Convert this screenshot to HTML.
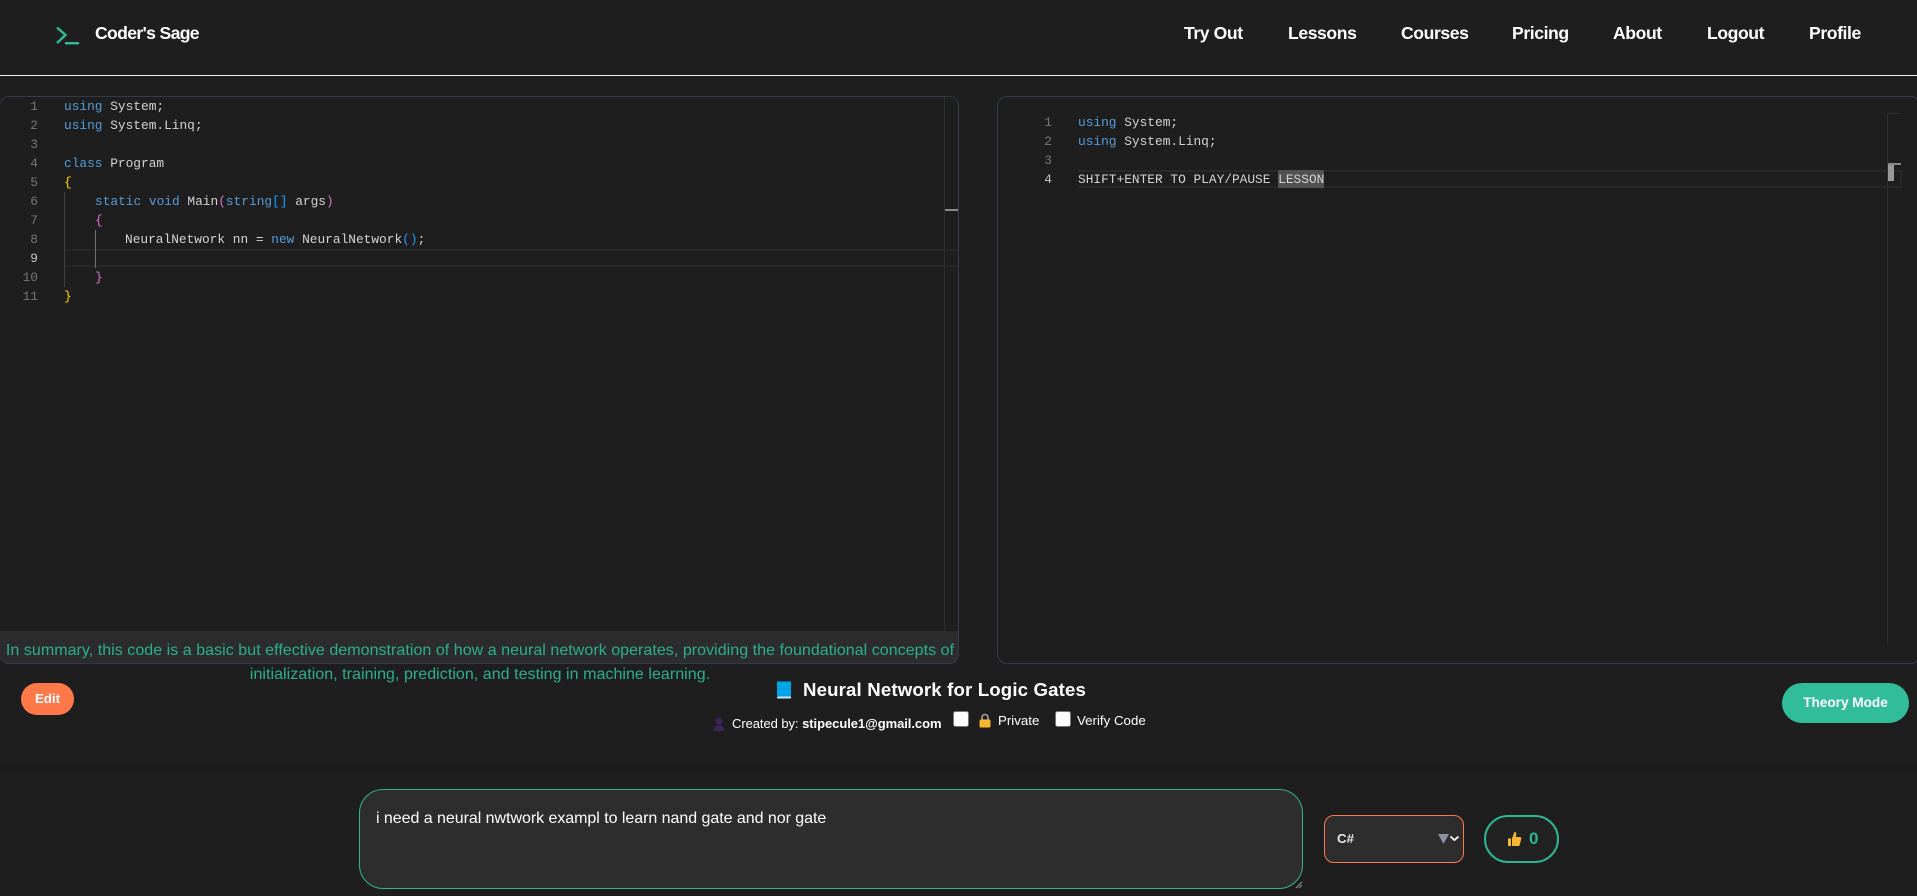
<!DOCTYPE html>
<html lang="en"><head><meta charset="utf-8"><title>Coder's Sage</title>
<style>
html,body{margin:0;padding:0;background:#1e1e1e;width:1917px;height:896px;overflow:hidden}
body{position:relative;font-family:"Liberation Sans",sans-serif;color:#fff}
.a{position:absolute;white-space:nowrap}
.nav{top:23px;font-size:17.6px;font-weight:700;line-height:20px;letter-spacing:-.42px;color:#fff}
.c{position:absolute;font-family:"Liberation Mono",monospace;font-size:12.83px;line-height:19px;height:19px;white-space:pre;color:#d4d4d4}
.n{position:absolute;font-family:"Liberation Mono",monospace;font-size:12.83px;line-height:19px;text-align:right;width:30px;color:#767676}
.k{color:#569cd6}.g{color:#ffd700}.p{color:#da70d6}.b{color:#179fff}
.box{position:absolute;border:1px solid #323a4c;box-sizing:border-box;border-radius:10px}
</style></head><body>
<svg class="a" style="left:54px;top:26px" width="26" height="20" viewBox="0 0 26 20"><path d="M3 1.500 L11.500 9 L3 17" fill="none" stroke="#2ebd96" stroke-width="2.400"/><path d="M11 17.200H25" stroke="#2ebd96" stroke-width="2.400"/></svg>
<div class="a" style="left:95px;top:23px;font-size:17.6px;font-weight:700;line-height:20px;letter-spacing:-.65px">Coder's Sage</div>
<div class="a nav" style="left:1184px">Try Out</div>
<div class="a nav" style="left:1288px">Lessons</div>
<div class="a nav" style="left:1401px">Courses</div>
<div class="a nav" style="left:1512px">Pricing</div>
<div class="a nav" style="left:1613px">About</div>
<div class="a nav" style="left:1707px">Logout</div>
<div class="a nav" style="left:1809px">Profile</div>
<div class="a" style="left:0;top:75px;width:1917px;height:1px;background:#f2f2f2"></div>

<!-- left editor -->
<div class="box" style="left:-1px;top:96px;width:960px;height:568px"></div>
<div class="a" style="left:944px;top:97px;width:1px;height:534px;background:#2e2e2e"></div>
<div class="a" style="left:945px;top:209px;width:13px;height:2px;background:#8a8a8a"></div>
<div class="a" style="left:64px;top:249px;width:894px;height:14px;border:2px solid #282828;border-width:2px 0"></div>
<div class="a" style="left:64px;top:192px;width:1px;height:95px;background:#404040"></div>
<div class="a" style="left:95px;top:230px;width:1px;height:38px;background:#707070"></div>
<div class="n" style="left:8px;top:97px">1</div>
<div class="n" style="left:8px;top:116px">2</div>
<div class="n" style="left:8px;top:135px">3</div>
<div class="n" style="left:8px;top:154px">4</div>
<div class="n" style="left:8px;top:173px">5</div>
<div class="n" style="left:8px;top:192px">6</div>
<div class="n" style="left:8px;top:211px">7</div>
<div class="n" style="left:8px;top:230px">8</div>
<div class="n" style="left:8px;top:249px;color:#c6c6c6">9</div>
<div class="n" style="left:8px;top:268px">10</div>
<div class="n" style="left:8px;top:287px">11</div>
<div class="c" style="left:64px;top:97px"><span class="k">using</span> System;</div>
<div class="c" style="left:64px;top:116px"><span class="k">using</span> System.Linq;</div>
<div class="c" style="left:64px;top:154px"><span class="k">class</span> Program</div>
<div class="c" style="left:64px;top:173px"><span class="g">{</span></div>
<div class="c" style="left:95px;top:192px"><span class="k">static</span> <span class="k">void</span> Main<span class="p">(</span><span class="k">string</span><span class="b">[]</span> args<span class="p">)</span></div>
<div class="c" style="left:95px;top:211px"><span class="p">{</span></div>
<div class="c" style="left:125px;top:230px">NeuralNetwork nn = <span class="k">new</span> NeuralNetwork<span class="b">()</span>;</div>
<div class="c" style="left:95px;top:268px"><span class="p">}</span></div>
<div class="c" style="left:64px;top:287px"><span class="g">}</span></div>

<!-- summary -->
<div class="a" style="left:0;top:631px;width:959px;height:33px;background:#2c2c2c;border-radius:0 0 10px 10px;box-sizing:border-box;border-bottom:1px solid #323a4c;border-right:1px solid #323a4c"></div>
<div class="a" style="left:0;top:639px;width:960px;text-align:center;font-size:16px;line-height:24px;color:#2ab08d;letter-spacing:.045px">In summary, this code is a basic but effective demonstration of how a neural network operates, providing the foundational concepts of<br>initialization, training, prediction, and testing in machine learning.</div>

<!-- right editor -->
<div class="box" style="left:997px;top:96px;width:924px;height:568px"></div>
<div class="a" style="left:1887px;top:113px;width:1px;height:531px;background:#2e2e2e"></div>
<div class="a" style="left:1887px;top:113px;width:14px;height:1px;background:#2e2e2e"></div>
<div class="a" style="left:1078px;top:170px;width:822px;height:14px;border:2px solid #282828;border-left:0"></div>
<div class="a" style="left:1278px;top:170px;width:46px;height:18px;background:#515151"></div>
<div class="a" style="left:1888px;top:163px;width:13px;height:2px;background:#8a8a8a"></div>
<div class="a" style="left:1888px;top:165px;width:6px;height:16px;background:#999"></div>
<div class="n" style="left:1022px;top:113px">1</div>
<div class="n" style="left:1022px;top:132px">2</div>
<div class="n" style="left:1022px;top:151px">3</div>
<div class="n" style="left:1022px;top:170px;color:#c6c6c6">4</div>
<div class="c" style="left:1078px;top:113px"><span class="k">using</span> System;</div>
<div class="c" style="left:1078px;top:132px"><span class="k">using</span> System.Linq;</div>
<div class="c" style="left:1078px;top:170px">SHIFT+ENTER TO PLAY/PAUSE LESSON</div>

<!-- title row -->
<div class="a" style="left:21px;top:683px;width:53px;height:32px;border-radius:16px;background:#ff7849;text-align:center;line-height:32px;font-size:13.3px;font-weight:700">Edit</div>
<svg class="a" style="left:775px;top:680px" width="18" height="20" viewBox="0 0 18 20"><path d="M2 1.500h14v15H4a2 2 0 0 0-2 2z" fill="#00a5e8"/><path d="M2 18.500a2 2 0 0 1 2-2h12v2z" fill="#cfe6f2"/></svg>
<div class="a" style="left:803px;top:679px;font-size:18.6px;font-weight:700;line-height:22px;letter-spacing:.17px">Neural Network for Logic Gates</div>
<svg class="a" style="left:712px;top:716px" width="14" height="16" viewBox="0 0 14 16"><circle cx="7" cy="5" r="3.600" fill="#3f2458"/><path d="M1.500 15c0-4 2.500-5.500 5.500-5.500s5.500 1.500 5.500 5.500z" fill="#3f2458"/></svg>
<div class="a" style="left:732px;top:715px;font-size:13px;line-height:17px;letter-spacing:-.06px">Created by: <b>stipecule1@gmail.com</b></div>
<div class="a" style="left:953px;top:711px;width:16px;height:16px;background:#fff;border:1px solid #767676;box-sizing:border-box;border-radius:2.500px"></div>
<svg class="a" style="left:979px;top:713px" width="12" height="15" viewBox="0 0 12 15"><path d="M3 7V4.500a3 3 0 0 1 6 0V7" fill="none" stroke="#a8a8a8" stroke-width="1.500"/><rect x=".5" y="6.500" width="11" height="8" rx="1.500" fill="#f7b731"/></svg>
<div class="a" style="left:998px;top:712px;font-size:13.3px;line-height:17px">Private</div>
<div class="a" style="left:1055px;top:711px;width:16px;height:16px;background:#fff;border:1px solid #767676;box-sizing:border-box;border-radius:2.500px"></div>
<div class="a" style="left:1077px;top:712px;font-size:13.3px;line-height:17px">Verify Code</div>
<div class="a" style="left:1782px;top:683px;width:127px;height:40px;border-radius:20px;background:#32bd9a;text-align:center;line-height:40px;font-size:13.600px;font-weight:700">Theory Mode</div>

<!-- bottom -->
<div class="a" style="left:0;top:760px;width:1917px;height:13px;background:linear-gradient(#1e1e1e,#1a1a1a)"></div>
<div class="a" style="left:359px;top:789px;width:944px;height:100px;box-sizing:border-box;border:1px solid #2fb592;border-radius:24px;background:#2d2d2d"></div>
<div class="a" style="left:376px;top:809px;font-size:16px;line-height:20px;letter-spacing:-.04px;color:#fff">i need a neural nwtwork exampl to learn nand gate and nor gate</div>
<svg class="a" style="left:1295px;top:881px" width="8" height="8" viewBox="0 0 8 8"><path d="M1 7L7 1M4 7L7 4" stroke="#999" stroke-width="1"/></svg>
<div class="a" style="left:1324px;top:815px;width:140px;height:48px;box-sizing:border-box;border:1px solid #ff7849;border-radius:10px;background:#2d2d2d"></div>
<div class="a" style="left:1337px;top:831px;font-size:13.3px;font-weight:700;line-height:16px;color:#e8e8e8">C#</div>
<svg class="a" style="left:1438px;top:832px" width="24" height="14" viewBox="0 0 24 14"><path d="M0 2h11l-5.500 10z" fill="#8c93a5"/><path d="M12.500 4.500l4 3.500 4-3.500" fill="none" stroke="#fff" stroke-width="1.800"/></svg>
<div class="a" style="left:1484px;top:815px;width:75px;height:48px;box-sizing:border-box;border:2px solid #2fb592;border-radius:24px;background:#222"></div>
<svg class="a" style="left:1507px;top:831px" width="15" height="16" viewBox="0 0 15 16"><path d="M1 7.500h3V15H1zM5 7.500L7.500 1c1.500 0 2 1 1.700 2.500L8.800 6H13c1 0 1.500 1 1.200 2l-1.500 6c-.2.700-.7 1-1.400 1H5z" fill="#f7b731"/></svg>
<div class="a" style="left:1529px;top:829px;font-size:17px;font-weight:700;line-height:20px;color:#2fb592">0</div>
</body></html>
